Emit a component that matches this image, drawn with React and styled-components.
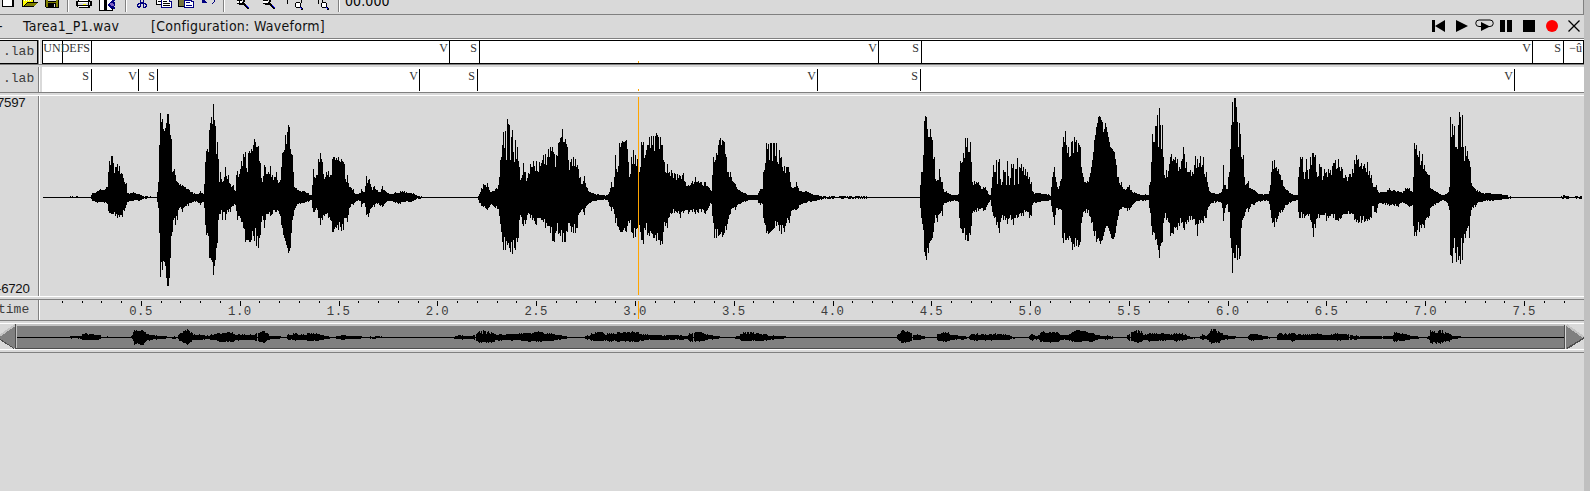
import React from 'react';
import styled, { createGlobalStyle } from 'styled-components';

const GlobalStyle = createGlobalStyle`
  body { margin: 0; background: #d9d9d9; overflow: hidden; }
  svg { display: block; flex: none; }
`;

const Desktop = styled.div`
  display: flex;
  width: 1590px;
  height: 491px;
  overflow: hidden;
  background: #c0c0c0;
`;
const Window = styled.main`
  display: flex;
  flex-direction: column;
  width: 1584px;
  background: #d9d9d9;
  overflow: hidden;
`;
const Toolbar = styled.div`
  display: flex;
  align-items: flex-start;
  box-sizing: border-box;
  height: 15px;
  flex: none;
  overflow: hidden;
  border-right: 1px solid #808080;
  border-bottom: 1px solid #808080;
`;
const ToolIcon = styled.svg`
  margin-left: ${(p) => p.$gap}px;
  shape-rendering: crispEdges;
`;
const ToolSeparator = styled.div`
  width: 1px;
  height: 12px;
  margin-left: ${(p) => p.$gap}px;
  background: #808080;
  border-right: 1px solid #fff;
`;
const Clock = styled.span`
  margin: -7px 0 0 5px;
  font: 14px/16px 'DejaVu Sans Condensed', 'DejaVu Sans', sans-serif;
  letter-spacing: 0.1px;
`;
const TitleBar = styled.header`
  display: flex;
  align-items: center;
  height: 23px;
  flex: none;
  font: 14px/21px 'DejaVu Sans Condensed', 'DejaVu Sans', sans-serif;
  letter-spacing: 0.27px;
  color: #111;
  white-space: pre;
`;
const Dash = styled.span`
  width: 25px;
  margin-left: -2px;
`;
const FileName = styled.span`
  width: 128px;
`;
const Configuration = styled.span`
  flex: none;
`;
const Transport = styled.div`
  display: flex;
  align-items: center;
  margin-left: auto;
  padding-right: 4px;
`;
const TransportIcon = styled.svg`
  width: ${(p) => p.$w}px;
  height: 14px;
  margin: -1px 0 0 ${(p) => p.$gap}px;
`;
const Rule = styled.div`
  height: ${(p) => p.$h || 1}px;
  flex: none;
  background: ${(p) => p.$c};
`;
const Pane = styled.section`
  display: flex;
  flex: none;
  height: ${(p) => p.$h}px;
`;
const PaneLabel = styled.div`
  box-sizing: border-box;
  width: 38px;
  flex: none;
  display: flex;
  flex-direction: column;
  justify-content: ${(p) => (p.$spread ? 'space-between' : 'center')};
  overflow: hidden;
  white-space: nowrap;
  color: #3c3c3c;
  font: 13px/16px 'Liberation Mono', monospace;
  padding: 0 0 ${(p) => p.$lift || 0}px ${(p) => p.$pad || 0}px;
  border: ${(p) => (p.$active ? '1px solid #000' : '0')};
  border-left: 0;
`;
const LabelText = styled.span`
  margin-left: ${(p) => p.$shift || 0}px;
`;
const ScaleText = styled.span`
  margin-left: ${(p) => p.$shift}px;
  color: #111;
  font: 13.3px/13px 'Liberation Sans', sans-serif;
  letter-spacing: -0.3px;
`;
const Sash = styled.div`
  width: 1px;
  flex: none;
  background: #808080;
  border-right: 1px solid #fff;
  margin-right: ${(p) => p.$gap || 0}px;
`;
const Track = styled.div`
  position: relative;
  display: flex;
  flex: 1;
  box-sizing: border-box;
  background: #fff;
  border: ${(p) => (p.$active ? '1px solid #000' : 'solid #fff')};
  border-width: ${(p) => (p.$active ? '1px' : '2px 0 1px')};
  &::after {
    content: '';
    position: absolute;
    left: ${(p) => (p.$active ? 595 : 596)}px;
    bottom: 0;
    width: 1px;
    height: 2px;
    background: #ffa500;
  }
`;
const Segment = styled.div`
  box-sizing: border-box;
  width: ${(p) => p.$w}px;
  flex: none;
  display: flex;
  justify-content: flex-end;
  padding-right: 1px;
  border-right: ${(p) => (p.$open ? 0 : 1)}px solid #000;
  color: #333;
  font: 12px/14px 'Liberation Serif', serif;
  white-space: nowrap;
`;
const SegmentText = styled.span`
  flex: none;
  min-width: 9px;
  text-align: center;
`;

/* Envelope key points of the recording: x, height above and below the axis. */
const KEYS = `
43 0 0;69 0 0;70 1 0;71 0 0;72 1 0;73 0 0;77 1 0;78 0 0;90 0 0;92 4 3;97 6 5;100 8 4;107 10 6;108 25 13;109 36 15;110 32 15;111 41 16;112 41 16;113 34 16;115 30 18;117 33 20;119 31 19;122 23 19;124 15 13;125 13 10;126 14 7;127 4 4;131 4 3;133 5 3;138 3 3;145 1 1;156 0 0;
157 5 4;158 15 10;159 52 35;160 84 79;161 75 64;162 78 72;163 68 63;164 66 64;165 69 68;166 74 80;167 83 88;168 83 88;169 73 80;170 62 60;171 58 38;172 25 34;173 26 22;174 28 20;175 22 27;177 15 22;178 14 12;180 13 9;182 12 14;185 10 8;188 8 8;192 5 4;197 3 4;200 6 7;203 3 4;
204 13 10;205 35 27;206 46 37;207 48 35;208 45 38;209 67 60;210 74 60;211 80 62;212 73 64;213 93 77;214 77 68;215 71 62;216 43 50;217 55 45;218 38 22;219 15 16;220 25 16;221 18 12;222 15 22;224 20 14;225 30 22;227 18 12;228 22 14;230 13 14;233 12 8;235 6 7;
236 22 13;237 26 22;238 20 18;240 28 20;241 36 24;243 43 30;245 45 44;247 25 42;248 44 42;249 46 44;250 44 44;251 48 42;252 46 33;253 52 38;254 58 43;255 55 30;256 50 48;258 51 50;259 36 40;260 34 37;262 15 18;264 32 30;265 30 22;268 25 16;270 31 18;272 22 16;275 20 14;276 25 14;279 15 16;280 17 18;
281 30 27;282 44 30;283 45 37;284 47 40;285 62 43;286 53 47;287 65 50;288 72 55;289 70 53;290 48 50;291 43 35;292 42 22;293 25 18;294 10 12;296 9 8;300 6 6;304 6 5;308 4 4;311 2 2;
312 12 10;313 28 14;314 20 14;316 22 10;318 38 20;320 44 27;321 38 20;322 35 22;324 18 18;326 25 16;328 26 20;330 22 22;332 38 34;333 40 34;334 40 31;336 39 30;338 40 32;340 35 29;341 38 33;343 35 32;344 33 20;345 18 20;347 22 24;348 14 17;350 10 9;353 8 7;355 3 4;360 4 3;361 8 9;364 5 5;
366 21 17;368 17 19;369 18 15;371 10 10;374 11 9;377 7 6;380 5 8;382 11 9;385 6 5;390 3 3;395 5 5;398 4 6;400 6 6;404 6 4;410 4 4;413 4 3;418 1 1;424 0 0;477 0 0;
479 3 5;481 9 8;483 13 9;485 12 10;487 14 12;489 7 9;492 6 7;495 8 10;498 12 11;499 20 18;500 37 26;501 40 34;502 52 44;503 65 52;505 66 52;506 37 43;507 78 47;508 73 45;509 72 50;510 37 54;511 60 44;512 67 56;513 45 42;514 35 50;515 57 52;516 38 40;517 50 44;518 36 40;519 30 22;
520 17 17;522 22 26;523 34 28;525 25 26;526 16 22;528 24 15;530 33 20;532 30 22;533 36 20;535 26 26;536 36 27;538 25 20;539 35 20;541 34 22;543 42 24;545 43 30;547 40 28;548 48 28;550 50 35;552 50 43;554 43 44;555 30 35;556 42 33;558 54 36;560 59 38;562 68 44;563 55 35;564 55 44;565 58 44;567 50 34;
568 37 25;570 35 28;571 38 34;573 40 35;575 38 35;577 32 30;578 28 17;580 20 14;582 13 11;584 21 17;585 14 10;587 9 7;590 5 5;595 3 3;602 2 2;607 2 2;609 5 8;611 15 13;613 10 11;614 20 16;615 42 25;617 25 28;619 54 32;620 50 34;621 54 34;622 56 34;623 55 32;624 55 30;625 56 33;626 57 34;627 48 28;628 35 23;629 20 25;
631 40 34;633 47 40;635 42 39;637 38 30;638 25 22;639 25 27;641 55 42;643 55 46;645 42 32;647 52 37;649 60 38;651 61 35;653 61 40;656 64 43;658 60 42;660 60 47;662 52 46;664 35 24;665 25 28;667 33 30;668 24 20;671 27 16;674 24 15;677 23 15;680 21 20;683 24 15;685 15 12;688 12 16;692 16 14;695 20 16;698 16 15;701 15 14;705 15 16;709 9 8;711 6 6;
712 22 18;713 40 25;714 35 40;716 44 40;718 52 38;719 57 37;720 59 36;722 57 39;723 56 37;724 55 35;726 40 32;728 25 21;730 25 16;733 15 10;735 13 12;737 8 7;740 6 6;745 4 4;750 2 2;757 2 2;758 4 5;760 8 7;762 8 6;
763 25 20;764 27 25;766 54 35;768 53 36;769 37 35;770 54 34;771 54 33;772 36 32;773 54 31;774 54 30;776 54 28;777 35 24;779 47 33;781 40 36;783 26 30;784 31 34;786 30 25;788 30 22;789 25 25;791 10 13;793 9 12;796 15 12;798 9 10;800 6 7;805 6 5;810 4 4;815 2 3;825 1 1;833 1 1;835 0 0;841 1 1;866 1 1;867 0 0;919 0 0;
920 12 10;921 25 20;922 25 26;923 42 32;924 76 54;925 81 58;926 80 62;927 68 50;928 60 55;929 60 45;930 68 43;931 60 42;932 57 40;933 38 34;934 40 25;935 18 17;937 17 24;939 28 16;940 20 15;942 15 18;943 8 7;946 6 5;950 3 4;955 2 3;958 3 4;
959 25 20;960 36 30;962 35 35;963 44 35;965 59 42;967 59 43;968 45 43;970 55 37;971 35 28;972 15 15;974 16 14;976 15 14;978 15 13;980 11 11;983 10 13;985 10 12;987 6 7;990 2 2;
992 20 14;993 32 18;994 25 20;996 37 27;997 13 24;998 35 30;999 38 35;1001 12 20;1003 27 22;1005 25 22;1006 12 20;1007 36 26;1009 12 20;1011 33 22;1013 33 27;1014 12 20;1015 28 20;1017 39 20;1018 13 19;1019 30 16;1021 33 18;1023 30 18;1025 28 14;1027 25 14;1029 20 20;1031 15 18;1032 6 7;1035 4 5;1040 4 4;1048 3 3;1050 1 2;
1051 10 8;1052 20 14;1054 30 27;1056 15 10;1058 8 12;1060 16 11;1061 18 12;1062 50 40;1063 60 45;1065 66 42;1066 52 42;1068 50 42;1069 40 38;1071 55 44;1072 56 52;1074 60 49;1076 57 48;1078 54 49;1079 52 47;1080 50 44;1081 30 25;1083 20 14;1085 15 15;1087 16 15;1089 20 18;
1091 30 25;1093 45 33;1094 57 38;1096 70 44;1097 74 41;1098 80 40;1099 81 43;1100 80 46;1101 77 43;1102 75 42;1103 65 38;1105 74 30;1106 70 28;1107 65 28;1108 60 30;1109 55 33;1110 50 36;1111 49 40;1112 48 41;1113 46 41;1114 45 39;1115 38 35;1116 32 28;1117 20 22;1118 20 18;1119 14 12;1121 15 11;1123 8 9;1127 10 13;1129 12 12;1131 7 9;1134 5 5;1138 3 3;1145 3 3;1148 2 2;
1149 12 10;1150 15 15;1151 35 28;1152 63 37;1154 55 35;1155 71 42;1157 82 47;1158 50 52;1159 89 60;1160 72 48;1161 48 45;1162 72 44;1163 40 25;1164 22 20;1166 27 22;1168 26 24;1170 40 38;1171 43 35;1173 38 36;1175 40 30;1177 38 32;1179 30 28;1181 36 25;1183 50 30;1184 43 32;1186 35 26;1188 25 24;1190 27 22;
1192 25 22;1195 41 27;1197 38 38;1198 30 26;1200 41 25;1203 40 25;1205 20 20;1206 25 20;1207 15 12;1209 6 8;1212 4 5;1220 4 4;1222 8 10;1223 32 23;1224 12 15;1225 12 10;1227 8 6;1228 20 14;1229 25 14;1230 48 40;1231 72 50;1232 95 75;1233 75 55;1234 99 60;1235 99 60;1236 90 47;1237 75 62;1238 50 50;1239 74 61;1240 63 58;
1241 40 30;1242 38 22;1243 42 20;1244 20 18;1245 12 14;1248 16 14;1250 9 9;1254 7 7;1257 4 4;1265 3 3;1268 3 3;1270 12 12;1271 25 20;1272 36 25;1274 37 29;1276 30 24;1278 28 18;1280 22 15;1282 17 14;1284 10 10;1287 7 7;1290 4 5;1297 2 2;
1298 20 14;1299 30 20;1300 40 20;1302 40 20;1304 18 20;1306 38 17;1308 18 18;1310 40 22;1312 44 30;1313 44 39;1315 42 30;1317 20 20;1319 33 20;1321 30 17;1322 17 17;1324 28 17;1326 25 23;1328 28 20;1330 27 18;1333 34 20;1335 37 22;1338 38 23;1341 30 20;1345 22 16;1349 23 16;1352 28 16;1354 37 22;1356 42 24;1358 38 25;1361 34 25;1364 33 24;1367 35 23;1369 26 22;1371 22 20;
1372 14 8;1374 10 14;1376 12 15;1378 5 6;1383 5 6;1389 9 8;1394 7 8;1398 6 9;1401 5 5;1405 9 6;1409 9 9;1412 5 7;1413 20 28;1414 54 38;1416 52 38;1417 42 32;1419 46 34;1421 36 30;1422 43 26;1424 32 30;1426 25 20;1428 22 20;1429 22 18;1430 9 10;1435 6 7;1438 4 5;1442 2 2;1447 4 5;
1449 10 12;1450 80 57;1451 60 58;1452 73 65;1453 62 50;1454 71 40;1455 50 55;1456 50 64;1458 72 62;1459 85 58;1460 80 66;1461 50 40;1462 82 62;1463 50 45;1465 51 40;1467 46 30;1469 36 40;1470 30 18;1471 14 12;1475 8 9;1480 5 4;1490 4 3;1500 3 2;1510 1 1;1515 0 0;1560 0 0;1563 2 1;1567 1 1;1570 0 0;1580 1 1;1582 1 0`
  .split(';')
  .map((k) => k.trim().split(' ').map(Number));

const noise = (n) => {
  const v = Math.sin(n * 127.1 + 11.7) * 43758.5453;
  return v - Math.floor(v);
};

const rough = (v, seed) => (v < 1.5 ? v * Math.round(noise(seed)) : v * (1 - 0.28 * noise(seed)));

const columns = [];
for (let i = 0; i < KEYS.length - 1; i += 1) {
  const [x0, u0, d0] = KEYS[i];
  const [x1, u1, d1] = KEYS[i + 1];
  columns.push([x0, u0, d0]);
  for (let x = x0 + 1; x < x1; x += 1) {
    const t = (x - x0) / (x1 - x0);
    const up = rough(u0 + (u1 - u0) * t, x);
    const down = rough(d0 + (d1 - d0) * t, x + 5000);
    columns.push([x, Math.round(up), Math.round(down)]);
  }
}

const bar = (x, mid, up, down) => `M${x} ${mid - up}h1v${up + down + 1}h-1z`;
const wavePath = columns.map(([x, u, d]) => bar(x - 40, 101, u, d)).join('');

const small = (v) => (v > 4 ? Math.round(v / 13 + 0.6) : 0);
const overviewPath = columns
  .map(([x, u, d]) => bar(Math.round(16.4 + (x - 43) * 1.0046), 13, small(u), small(d)))
  .join('');

const SCALE = 197.6;
const ORIGIN = 2.6;
const ticks = Array.from({ length: 77 }, (_, i) => i + 1);

function TimeAxis() {
  return (
    <svg width="1544" height="20" fontFamily="'Liberation Mono', monospace" fontSize="12.3" letterSpacing="0.45" fill="#3c3c3c">
      {ticks.map((n) => (
        <rect key={n} x={Math.floor(ORIGIN + (n / 10) * SCALE)} y="1" width="1" height={n % 5 ? 2 : 5} fill="#000" />
      ))}
      {ticks.filter((n) => n % 5 === 0).map((n) => (
        <text key={n} x={ORIGIN + (n / 10) * SCALE - 0.4} y="15" textAnchor="middle">{(n / 10).toFixed(1)}</text>
      ))}
      <rect x="598" y="1" width="1" height="18" fill="#ffa500" />
    </svg>
  );
}

function Overview() {
  return (
    <svg width="1584" height="25" shapeRendering="crispEdges">
      <rect x="16" width="1549" height="25" fill="#808080" />
      <rect x="16" width="1549" height="2" fill="#c3c3c3" />
      <rect x="15" y="24" width="1550" height="1" fill="#4d4d4d" />
      <rect x="16" y="13" width="1548" height="1" />
      <path d={overviewPath} />
      <path d="M-3 13L15 1V24H13Z" fill="#808080" />
      <path d="M-2 13L15 1" stroke="#c3c3c3" strokeWidth="2" />
      <path d="M-2 14L14 24.5" stroke="#4d4d4d" />
      <rect x="15" y="0" width="1" height="25" fill="#4d4d4d" />
      <rect x="16" y="1" width="1" height="23" fill="#c3c3c3" />
      <rect x="1564" y="1" width="1" height="24" fill="#4d4d4d" />
      <rect x="1565" y="0" width="1" height="25" fill="#d9d9d9" />
      <path d="M1566 1L1584 14L1567 25H1566Z" fill="#808080" />
      <path d="M1566.5 1L1584 13.5" stroke="#c3c3c3" strokeWidth="2" />
      <path d="M1584 14L1567 24.5" stroke="#4d4d4d" strokeWidth="1.4" />
    </svg>
  );
}

function LabelTrack({ active, marks, tail }) {
  let from = active ? 43 : 42;
  const cells = marks.map(([x, text]) => {
    const w = x + 1 - from;
    from = x + 1;
    return <Segment key={x} $w={w}>{text && <SegmentText>{text}</SegmentText>}</Segment>;
  });
  return (
    <Track $active={active}>
      {cells}
      {tail && <Segment $open $w={1583 - from}><SegmentText>{tail}</SegmentText></Segment>}
    </Track>
  );
}

const FIRST_MARKS = [[62, ''], [91, 'UNDEFS'], [449, 'V'], [479, 'S'], [878, 'V'], [921, 'S'], [1532, 'V'], [1563, 'S']];
const SECOND_MARKS = [[91, 'S'], [138, 'V'], [157, 'S'], [419, 'V'], [477, 'S'], [817, 'V'], [920, 'S'], [1514, 'V']];

function Magnifier({ gap, sign }) {
  return (
    <ToolIcon $gap={gap} width="15" height="9">
      <path d="M0 0h1v2h1v2h2v1h4v-1h1v-2h1v-2h-2v2h-1v1h-5v-1h-1v-2z" />
      <path d="M2 0h5v3h-5z" fill="#fff" />
      <path d={sign === '+' ? 'M2 0h5v1h-5zM4 0h1v3h-1z' : 'M2 0h5v1h-5z'} />
      <path d="M8 3h2v1h1v1h1v1h1v1h1v2h-2v-1h-1v-1h-1v-1h-1v-1h-1z" />
      <path d="M11 5h1v1h1v1h1v1h-1v-1h-1v-1h-1z" fill="#00f" />
    </ToolIcon>
  );
}

function RangeMagnifier({ gap, width, left }) {
  return (
    <ToolIcon $gap={gap} width={width} height="11">
      <path d={left ? 'M0 0h1v4h-1zM14 0h1v3h-1z' : 'M0 0h1v4h-1zM4 0h1v3h-1z'} />
      <g transform={`translate(${width - 10} 1)`}>
        <path d="M2 1h4v1h1v4h-1v1h-4v-1h-1v-4h1z" />
        <path d="M2 2h4v4h-4z" fill="#fff" />
        <path d="M6 6h2v1h1v2h-2v-2h-1z" />
        <path d="M6 6h1v1h1v1h-1v-1h-1z" fill="#00f" />
      </g>
    </ToolIcon>
  );
}

export default function App() {
  return (
    <Desktop>
      <GlobalStyle />
      <Window>
        <Toolbar>
          <ToolIcon $gap={2} width="12" height="8">
            <path d="M0 0h12v7h-12z" />
            <path d="M1 0h9v6h-9z" fill="#fff" />
          </ToolIcon>
          <ToolIcon $gap={8} width="16" height="8">
            <path d="M0 0h12v2h4v1h-1v1h-1v1h-1v1h-1v1h-12z" />
            <path d="M1 0h10v2h-6v1h-1v1h-1v1h-1v1h-1z" fill="#ff0" />
            <path d="M5 3h10v1h-1v1h-1v1h-10v-1h1v-1h1z" fill="#808000" />
            <path d="M2 0h1v1h-1zM4 0h1v1h-1zM6 0h1v1h-1zM8 0h1v1h-1z" fill="#fff" />
          </ToolIcon>
          <ToolIcon $gap={7} width="14" height="8">
            <path d="M0 0h14v8h-13v-1h-1z" />
            <path d="M1 0h2v2h8v-2h2v7h-12z" fill="#808000" />
            <path d="M3 3h8v4h-8z" />
            <path d="M9 4h1v3h-1zM3 0h8v1h-8z" fill="#d9d9d9" />
          </ToolIcon>
          <ToolSeparator $gap={8} />
          <ToolIcon $gap={7} width="16" height="9">
            <path d="M2 0h12v1h2v5h-2v2h-11v-1h-2v-1h-1v-5h2z" />
            <path d="M4 0h8v1h-9v-1zM2 2h10v1h-10zM2 6h10v1h-10z" fill="#fff" />
            <path d="M2 3h10v2h-10zM13 2h1v3h-1z" fill="#d9d9d9" />
            <path d="M7 4h3v1h-3z" fill="#ff0" />
          </ToolIcon>
          <ToolIcon $gap={7} width="17" height="11">
            <path d="M0 0h14v11h-14z" />
            <path d="M1 0h4v10h-4zM8 0h5v10h-5z" fill="#fff" />
            <path d="M6 0h2v9h-2z" />
            <path d="M9 4h1v-1h1v-1h1v-1h1v-1h3v1h-1v1h1v4h-1v1h1v2h-2v-1h-1v1h-1v-1h-1v-1h-1v-1h-1z" fill="#000080" />
            <path d="M11 3h3v1h1v2h-3v-1h-1z" fill="#8060c0" />
          </ToolIcon>
          <ToolSeparator $gap={9} />
          <ToolIcon $gap={10} width="10" height="9" fill="none" stroke="#000080">
            <path d="M3.5 0v2l3 2M6.5 0v2l-3 2M1.5 3.5h2v3h-1v1h-1v-1h-1v-2h1zM6.5 3.5h2v1h1v2h-1v1h-2z" />
          </ToolIcon>
          <ToolIcon $gap={9} width="16" height="8">
            <path d="M0 0h9v5h-9z" />
            <path d="M1 0h6v4h-6z" fill="#fff" />
            <path d="M5 0h9v1h2v7h-11z" fill="#000080" />
            <path d="M6 0h7v2h2v5h-9z" fill="#fff" />
            <path d="M7 1h4v1h-4zM7 3h7v1h-7zM7 5h7v1h-7zM2 1h3v1h-3z" />
          </ToolIcon>
          <ToolIcon $gap={6} width="16" height="8">
            <path d="M0 0h13v7h-13z" />
            <path d="M1 0h11v6h-11z" fill="#77753d" />
            <path d="M6 0h8v1h2v7h-10z" fill="#000080" />
            <path d="M7 1h6v1h2v5h-8z" fill="#fff" />
            <path d="M8 2h4v1h-4zM8 5h6v1h-6z" fill="#000080" />
          </ToolIcon>
          <ToolIcon $gap={8} width="14" height="5">
            <path d="M0 0h3v1h1v1h1v1h-5zM13 0h-1v2h-1v1h-1v1h1v-1h1v-1h1z" fill="#000080" />
          </ToolIcon>
          <ToolSeparator $gap={7} />
          <Magnifier gap={10} sign="+" />
          <Magnifier gap={11} sign="-" />
          <RangeMagnifier gap={11} width={17} left />
          <RangeMagnifier gap={14} width={12} />
          <ToolSeparator $gap={8} />
          <Clock>00.000</Clock>
        </Toolbar>

        <TitleBar>
          <Dash>-</Dash>
          <FileName>Tarea1_P1.wav</FileName>
          <Configuration>[Configuration: Waveform]</Configuration>
          <Transport>
            <TransportIcon $w={13} $gap={0} viewBox="0 0 13 14">
              <path d="M0 1h3v12h-3zM13 1v12L3 7z" />
            </TransportIcon>
            <TransportIcon $w={12} $gap={11} viewBox="0 0 12 14">
              <path d="M0 1L12 7L0 13z" />
            </TransportIcon>
            <TransportIcon $w={19} $gap={7} viewBox="0 0 19 14">
              <path d="M6 7.5H4a3.2 3.2 0 0 1 0-6.5H15a3.2 3.2 0 0 1 0 6.5H14" fill="none" stroke="#000" />
              <path d="M6 3L15 7.5L6 12z" />
            </TransportIcon>
            <TransportIcon $w={12} $gap={6} viewBox="0 0 12 14">
              <path d="M0 1h5v12h-5zM7 1h5v12h-5z" />
            </TransportIcon>
            <TransportIcon $w={12} $gap={11} viewBox="0 0 12 14">
              <path d="M0 1h12v12h-12z" />
            </TransportIcon>
            <TransportIcon $w={12} $gap={11} viewBox="0 0 12 14">
              <circle cx="6" cy="7" r="6" fill="#f00" />
            </TransportIcon>
            <TransportIcon $w={12} $gap={10} viewBox="0 0 12 14">
              <path d="M0.5 1.5L11.5 12.5M11.5 1.5L0.5 12.5" stroke="#000" strokeWidth="1.3" />
            </TransportIcon>
          </Transport>
        </TitleBar>
        <Rule $c="#808080" />
        <Rule $c="#fff" />

        <Pane $h={24}>
          <PaneLabel $active $pad={3}><LabelText>.lab</LabelText></PaneLabel>
          <Sash $gap={2} />
          <LabelTrack active marks={FIRST_MARKS} tail="−û" />
        </Pane>
        <Rule $c="#808080" />
        <Rule $c="#d9d9d9" $h={2} />

        <Pane $h={25}>
          <PaneLabel $pad={3} $lift={1}><LabelText>.lab</LabelText></PaneLabel>
          <Sash $gap={2} />
          <LabelTrack marks={SECOND_MARKS} />
        </Pane>
        <Rule $c="#808080" />
        <Rule $c="#d9d9d9" $h={2} />
        <Rule $c="#fff" />

        <Pane $h={200}>
          <PaneLabel $spread $lift={1}>
            <ScaleText $shift={-3}>7597</ScaleText>
            <ScaleText $shift={-3}>-6720</ScaleText>
          </PaneLabel>
          <Sash />
          <svg width="1544" height="200" shapeRendering="crispEdges">
            <path d={wavePath} />
            <rect x="598" y="1" width="1" height="198" fill="#ffa500" />
          </svg>
        </Pane>
        <Rule $c="#fff" />
        <Rule $c="#d9d9d9" $h={2} />
        <Rule $c="#808080" />

        <Pane $h={20}>
          <PaneLabel><LabelText $shift={-2}>time</LabelText></PaneLabel>
          <Sash />
          <TimeAxis />
        </Pane>
        <Rule $c="#808080" />
        <Rule $c="#d9d9d9" $h={2} />
        <Rule $c="#fff" />
        <Overview />
        <Rule $c="#fff" />
        <Rule $c="#d9d9d9" $h={2} />
        <Rule $c="#808080" />
      </Window>
    </Desktop>
  );
}
